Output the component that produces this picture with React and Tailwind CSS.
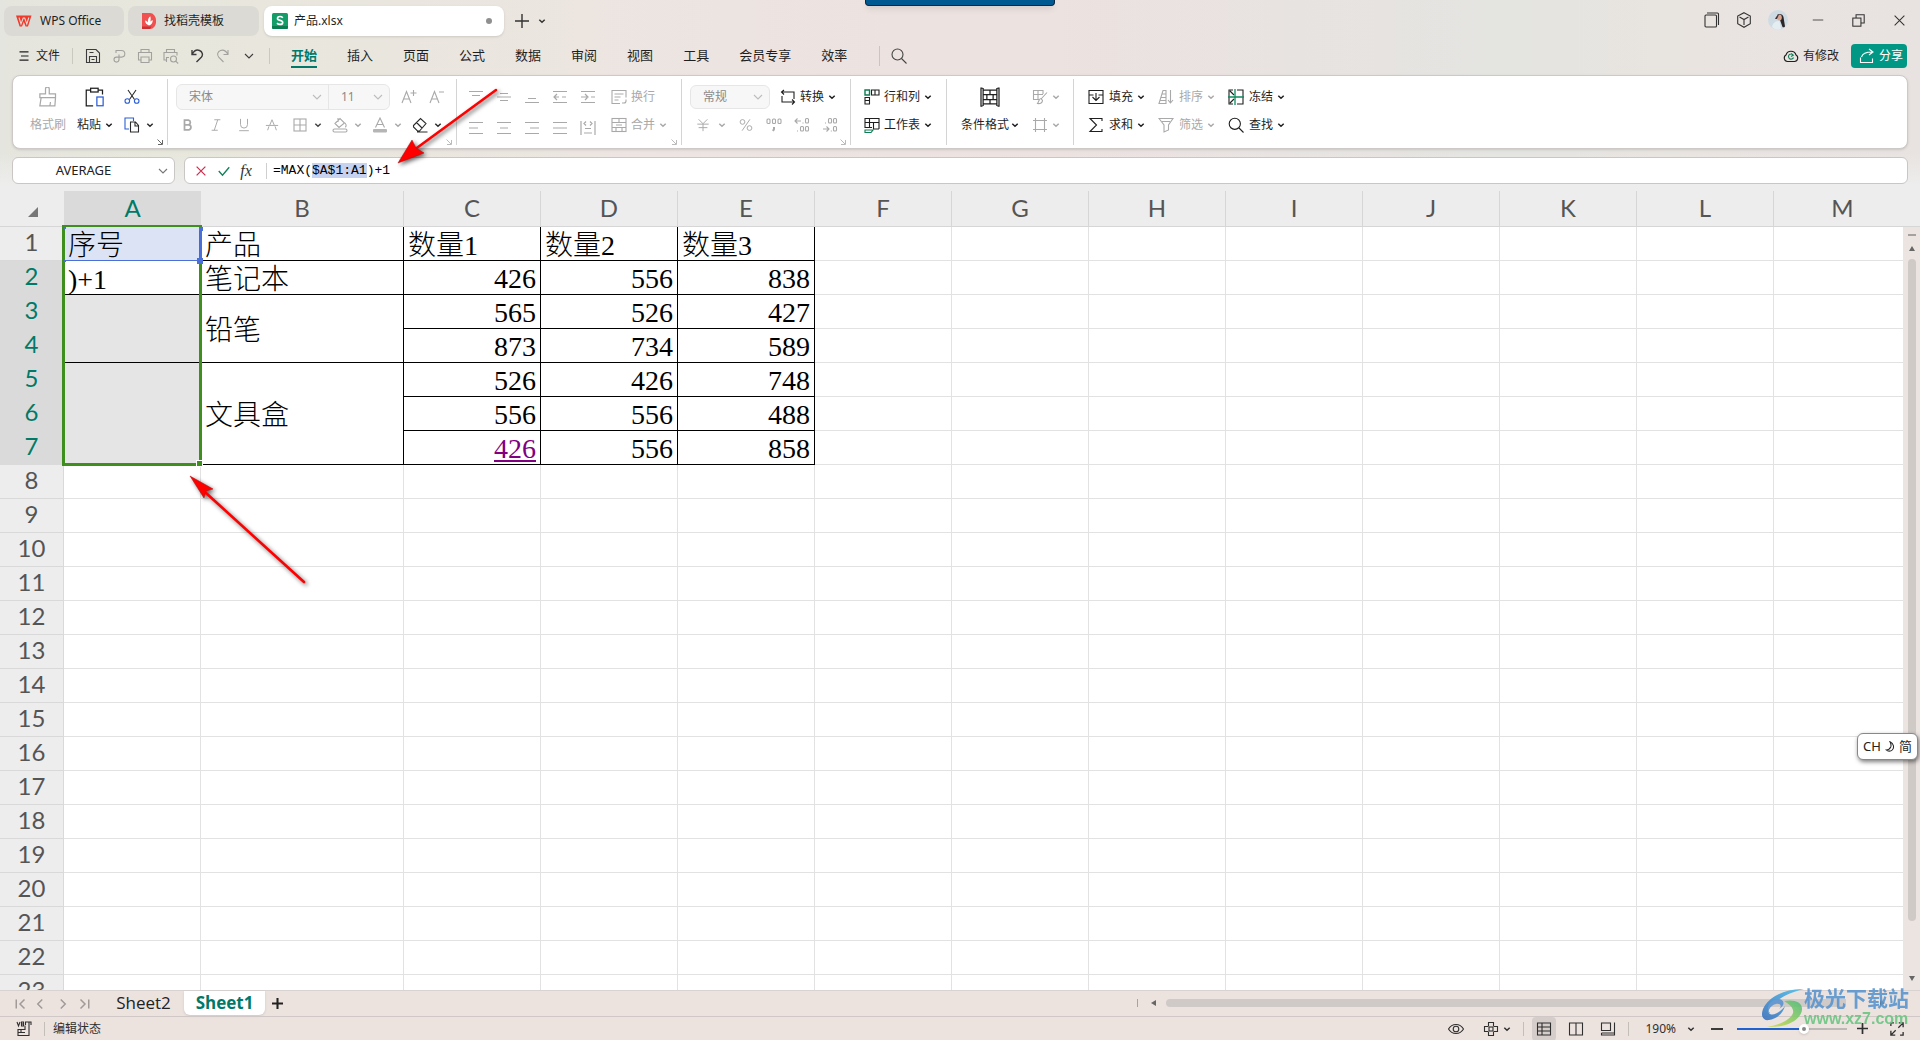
import React from "react";

const UI = "font-['Noto_Sans','Noto_Sans_CJK_SC',sans-serif]";
const SHEET_FONT = "font-['Liberation_Serif','Noto_Sans_CJK_SC',serif]";

function Icon({ children, size = 16, width = 1.1, className = "" }) {
  return (
    <svg
      width={size}
      height={size}
      viewBox="0 0 16 16"
      fill="none"
      stroke="currentColor"
      strokeWidth={width}
      className={"shrink-0 " + className}
      aria-hidden="true"
    >
      {children}
    </svg>
  );
}

function Chevron({ className = "" }) {
  return (
    <svg width="8" height="8" viewBox="0 0 8 8" fill="none" stroke="currentColor" strokeWidth="1.5" className={"shrink-0 " + className} aria-hidden="true">
      <path d="M1.3 2.8 4 5.3 6.7 2.8" />
    </svg>
  );
}

function WideChevron({ className = "" }) {
  return (
    <svg width="10" height="10" viewBox="0 0 10 10" fill="none" stroke="currentColor" strokeWidth="1.1" className={"shrink-0 " + className} aria-hidden="true">
      <path d="M1 3 5 7 9 3" />
    </svg>
  );
}

function Launcher({ className }) {
  return (
    <svg width="6" height="6" viewBox="0 0 6 6" fill="none" stroke="currentColor" className={"absolute bottom-0 right-1 " + className} aria-hidden="true">
      <path d="M.5.5 5 5M5.5 1v4.5H1" />
    </svg>
  );
}

function Tool({ label, children, dim }) {
  return (
    <button aria-label={label} className={"flex h-7 w-7 items-center justify-center " + (dim ? "text-[#a9a9a9]" : "text-[#2b2b2b]")}>
      {children}
    </button>
  );
}

function ToolMenu({ label, children, dim, darkArrow }) {
  return (
    <button aria-label={label} className={"flex h-7 w-10 items-center gap-1 pl-[6px] " + (dim ? "text-[#a9a9a9]" : "text-[#2b2b2b]")}>
      {children}
      <Chevron className={darkArrow ? "ml-[2px] text-[#444]" : "ml-[2px]"} />
    </button>
  );
}

function LabelTool({ label, icon, dim, arrow = true }) {
  return (
    <button className={"flex h-7 items-center gap-1 whitespace-nowrap text-xs " + (dim ? "text-[#a9a9a9]" : "text-[#1f1f1f]")}>
      {icon}
      <span>{label}</span>
      {arrow && <Chevron />}
    </button>
  );
}

function Group({ className, children, launcher }) {
  return (
    <div className={"relative h-[66px] shrink-0 border-r border-[#d4d4d4] pt-1 " + className}>
      {children}
      {launcher && <Launcher className={launcher} />}
    </div>
  );
}

function Picker({ label, value, className }) {
  return (
    <div className={"relative flex h-6 items-center " + className}>
      <select aria-label={label} className="h-full w-full appearance-none bg-transparent text-xs text-[#8a8a8a] outline-none pl-3" defaultValue={value}>
        <option>{value}</option>
      </select>
      <WideChevron className="pointer-events-none absolute right-1.5 text-[#bdbdbd]" />
    </div>
  );
}

function TitleBar() {
  return (
    <div className="flex h-[38px] items-start pl-1 pt-1.5 text-xs text-[#1f1f1f]">
      <button className="flex h-[30px] w-[120px] items-center gap-2 rounded-lg bg-[#dbdad4] pl-3">
        <svg width="16" height="12" viewBox="0 0 16 12" aria-hidden="true">
          <path d="M0 .5h15.5L12 11.500H9.600L7.800 7 6 11.500H3.600z" fill="#f0382b" />
          <path d="M3 2.500 5 9 7.200 3h1.500L10.800 9l2-6.500" fill="none" stroke="#dbdad4" strokeWidth="1.100" />
        </svg>
        <span>WPS Office</span>
      </button>
      <button className="ml-1 flex h-[30px] w-[131px] items-center gap-2 rounded-lg bg-[#dbdad4] pl-3.5">
        <svg width="14" height="16" viewBox="0 0 14 16" aria-hidden="true">
          <path d="M0 0h8a6 7.500 0 0 1 6 7.500A6 7.500 0 0 1 8 16H0z" fill="#f0504f" />
          <path d="M0 13.500h9.500L8 16H0z" fill="#c93234" />
          <path d="M7 12.500C4.300 11.500 3 9.800 3.200 7.600c1.300.3 2.200 1 2.800 2.100C5.600 7 6.300 4.700 8.300 3.300c.6 2 .5 3.800-.1 5.600.6-.9 1.400-1.500 2.600-1.700-.1 2.600-1.200 4.500-3.800 5.300z" fill="#fff" />
        </svg>
        <span>找稻壳模板</span>
      </button>
      <button className="ml-[5px] flex h-[30px] w-60 items-center gap-1.5 rounded-lg bg-white pl-2 pr-3 shadow-sm">
        <svg width="16" height="16" viewBox="0 0 16 16" aria-hidden="true">
          <rect width="16" height="16" rx="1.500" fill="#149c69" />
          <path d="M0 13h16v1.500A1.500 1.500 0 0 1 14.500 16h-13A1.500 1.500 0 0 1 0 14.500z" fill="#0b7b50" />
          <path d="M10.800 4.700C10 3.800 9 3.500 8 3.500c-1.500 0-2.500.7-2.500 1.900 0 2.600 5.200 1.300 5.200 4 0 1.300-1.100 2-2.700 2-1.200 0-2.200-.4-3-1.300" fill="none" stroke="#fff" strokeWidth="1.700" />
        </svg>
        <span>产品.xlsx</span>
        <span className="ml-auto h-1.5 w-1.5 rounded-full bg-[#8f8f8f]" />
      </button>
      <button aria-label="新建" className="ml-2.5 flex h-[30px] w-4 items-center text-[#333]">
        <Icon width={1.4}><path d="M8 1v14M1 8h14" /></Icon>
      </button>
      <button aria-label="标签列表" className="ml-2 flex h-[30px] items-center text-[#333]"><Chevron /></button>
      <div className="ml-auto flex h-7 items-center pr-[14px] text-[#333]">
        <button aria-label="窗口" className="mr-4">
          <Icon><rect x="1" y="3" width="11.500" height="12" rx="1" /><path d="M3 1h10.500c.8 0 1 .3 1 1v11" /></Icon>
        </button>
        <button aria-label="工作区" className="mr-4">
          <Icon><path d="M8 .7 14.300 4v7.700L8 15.300 1.700 11.700V4zM3.500 5 8 7.500 12.500 5M8 7.500v5.500" /></Icon>
        </button>
        <button aria-label="账户" className="mr-6">
          <svg width="20" height="20" viewBox="0 0 20 20" aria-hidden="true">
            <circle cx="10" cy="10" r="10" fill="#cfdbe3" />
            <path d="M9 5c2-2 6-1 6.500 2l1.500 9.500c-1 1-2 1-2.500.5L12 10z" fill="#2b2428" />
            <ellipse cx="11.500" cy="7.500" rx="2.300" ry="3" fill="#d9a692" />
            <path d="M7 9c1-2 2-4 4-4.500L9 9z" fill="#40343a" />
            <path d="M4 17c1-5 4-6 7.500-6l1.500 8c-3 1.400-6.500.8-9-2z" fill="#e4edf1" />
          </svg>
        </button>
        <button aria-label="最小化" className="mr-7"><Icon size={12}><path d="M1 8h14" /></Icon></button>
        <button aria-label="还原" className="mr-7">
          <Icon size={13} width={1.300}><rect x="1" y="5" width="10" height="10" /><path d="M5 5V1h10v10h-4" /></Icon>
        </button>
        <button aria-label="关闭"><Icon size={13} width={1.300}><path d="M2 2l12 12M14 2 2 14" /></Icon></button>
      </div>
    </div>
  );
}

const MENUS = ["插入", "页面", "公式", "数据", "审阅", "视图", "工具", "会员专享", "效率"];

function MenuBar() {
  return (
    <div className="flex h-[37px] items-center pl-[18px] pr-[13px] pb-0.5 text-xs text-[#1f1f1f]">
      <button className="flex items-center gap-1.5">
        <Icon size={12} width={1.400}><path d="M2 2.500h12M4 8h10M2 13.500h12" /></Icon>
        <span>文件</span>
      </button>
      <span className="ml-3 h-4 w-px bg-[#cbc8c2]" />
      <div className="ml-3 flex items-center gap-2.5 text-[#3c3c3c]">
        <button aria-label="保存"><Icon><path d="M1.500 1.500h9.500l3.500 3.500v9.500h-13zM4.500 14.500V8.500h7v6M4.500 4.500h4M6.500 11.500h3" /></Icon></button>
        <button aria-label="输出" className="text-[#a3a19d]"><Icon><path d="M5 5V2.500h5.500a3.300 3.300 0 0 1 0 6.600H5.500a2.500 2.500 0 1 0 2.500 2.500V6.500" /></Icon></button>
        <button aria-label="打印" className="text-[#a3a19d]"><Icon><path d="M4 4.500v-3h8v3M4 12H1.500V4.500h13V12H12M4 9h8v5.500H4z" /></Icon></button>
        <button aria-label="打印预览" className="text-[#a3a19d]"><Icon><path d="M3.500 4.500v-3h8v3M3.500 12H1V4.500h13v3M3.500 14V9.500H6" /><circle cx="10.500" cy="11" r="3" /><path d="m12.700 13.200 2.500 2.300" /></Icon></button>
        <button aria-label="撤销"><Icon width={1.400}><path d="M3 2v4.500h4.500M3.300 6C5 3 8 1.500 10.500 2.500c3 1.200 3.800 4.500 1.800 6.700L7.500 14" /></Icon></button>
        <button aria-label="恢复" className="text-[#a3a19d]"><Icon><path d="M13 2v4.500H8.500M12.700 6C11 3 8 1.500 5.500 2.500 2.500 3.700 1.700 7 3.700 9.200L8.500 14" /></Icon></button>
        <button aria-label="更多" className="pl-[3px]"><WideChevron /></button>
      </div>
      <span className="ml-[15px] h-4 w-px bg-[#cbc8c2]" />
      <nav className="ml-[21px] flex items-center gap-[30px] text-[13px]">
        <button className="relative font-bold text-[#00796b]">
          开始
          <span className="absolute -bottom-1 left-0 h-0.5 w-full bg-[#00796b]" />
        </button>
        {MENUS.map((m) => (
          <button key={m}>{m}</button>
        ))}
      </nav>
      <span className="ml-8 h-5 w-px bg-[#cbc5c2]" />
      <button aria-label="搜索" className="ml-[11px] text-[#444]"><Icon><circle cx="6.500" cy="6.500" r="5.500" /><path d="m10.500 10.500 5 5" /></Icon></button>
      <button className="ml-auto flex items-center gap-1">
        <Icon><path d="M4.500 13.500h7a3.500 3.500 0 0 0 1.500-6.500A5.200 5.200 0 0 0 3 7a3.500 3.500 0 0 0 1.500 6.500z" /><path d="M10.300 7.200A2.600 2.600 0 1 0 10.500 9.500M8 5.500l2.300 1.700L8 8.500" stroke="#12805c" /></Icon>
        <span>有修改</span>
      </button>
      <button className="ml-3 flex h-6 w-14 items-center gap-1 rounded bg-[#009885] pl-2 text-white">
        <Icon><path d="M1.500 9.500v5h12v-4M2.500 9C3.500 5.500 6 4 13 4M10 1l4 3-4 3" /></Icon>
        <span>分享</span>
      </button>
    </div>
  );
}

function AlignIcon({ d }) {
  return <Icon width={1.200}><path d={d} /></Icon>;
}

function Ribbon() {
  return (
    <div className="mx-3 flex h-[74px] overflow-hidden rounded-lg border border-[#cdc9c7] bg-white py-[3px] shadow-sm">
      <Group className="flex w-[155px] pl-[11px] text-xs" launcher="text-[#666]">
        <button className="flex w-12 flex-col items-center text-[#a9a9a9]">
          <span className="flex h-7 items-center"><Icon size={20} width={1}><path d="M1.500 8.500v-3h4.500V1.500a1.500 1.500 0 0 1 3 0V5.500h5v3zM2.500 8.500 1.500 15h12l.5-6.500M9.500 15l.5-3" /></Icon></span>
          <span className="flex h-7 items-center whitespace-nowrap">格式刷</span>
        </button>
        <button className="flex w-[46px] flex-col items-center text-[#1f1f1f]">
          <span className="flex h-7 items-center"><Icon size={20} width={1}><path d="M6.500 15H1V2.500h3.500M10.500 2.500H14V6" /><rect x="4.500" y="1" width="6" height="3" /><rect x="9.500" y="8" width="5" height="7" stroke="#2b5ed8" /></Icon></span>
          <span className="flex h-7 items-center gap-1 whitespace-nowrap">粘贴<Chevron /></span>
        </button>
        <div>
          <Tool label="剪切"><Icon><path d="M4 1l6.500 9.500M12 1 5.500 10.500" /><circle cx="3.300" cy="12" r="2.300" stroke="#2b5ed8" /><circle cx="12.700" cy="12" r="2.300" stroke="#2b5ed8" /></Icon></Tool>
          <ToolMenu label="复制"><Icon><path d="M5 12H1V1h8.500v3" stroke="#2b5ed8" /><path d="M6.500 5h5l3 3.500V15h-8zM11 5v4h3.500" /></Icon></ToolMenu>
        </div>
      </Group>
      <Group className="w-[289px] pl-2" launcher="text-[#bbb]">
        <div className="flex h-7 items-center">
          <div className="flex rounded-md border border-[#e6e6e6] bg-[#f7f7f7]">
            <Picker label="字体" value="宋体" className="w-[152px] border-r border-[#e6e6e6]" />
            <Picker label="字号" value="11" className="w-[60px]" />
          </div>
          <div className="ml-[5px] flex text-[#a9a9a9]">
            <Tool dim label="增大字号"><Icon><path d="M1 14 5.500 2.500 10 14M2.500 10h6M12.500 1v6M9.500 4h6" /></Icon></Tool>
            <Tool dim label="减小字号"><Icon><path d="M1 14 5.500 2.500 10 14M2.500 10h6M10 3h5" /></Icon></Tool>
          </div>
        </div>
        <div className="-ml-0.5 flex">
          <Tool dim label="加粗"><Icon size={14} width={2}><path d="M4 2.500h4.500a2.700 2.700 0 0 1 0 5.300H4zM4 7.800h5a2.900 2.900 0 0 1 0 5.700H4z" /></Icon></Tool>
          <Tool dim label="倾斜"><Icon size={14}><path d="M6 2h7M3 14h7M10 2 6 14" /></Icon></Tool>
          <Tool dim label="下划线"><Icon size={14}><path d="M4 1v6.500a4 4 0 0 0 8 0V1M2.500 14.500h11" /></Icon></Tool>
          <Tool dim label="删除线"><Icon size={14}><path d="M1 8.500h14M8 2 5.500 8M8 2l2.500 6M4.500 9.500 3 14M11.500 9.500 13 14" /></Icon></Tool>
          <ToolMenu dim darkArrow label="边框"><Icon><rect x="2" y="2" width="12" height="12" /><path d="M8 2v12M2 8h12" /></Icon></ToolMenu>
          <ToolMenu dim label="填充颜色"><Icon><path d="M3 6.500 8 1.500l4.500 4.500L7 10.500zM6 1v4M13 6c2 2.500 1 4 0 4" /><rect x="1" y="12" width="14" height="3" rx="1.500" /></Icon></ToolMenu>
          <ToolMenu dim label="字体颜色"><Icon><path d="M3.500 10.500 8 1l4.500 9.500M5 7.500h6" /><rect x="1" y="12" width="14" height="3.500" rx="1" fill="#b5b5b5" stroke="none" /></Icon></ToolMenu>
          <ToolMenu label="清除"><Icon><path d="M1.500 8.500 8.500 1.500l5.500 5-6.500 7.500H5.500L1.500 10zM4.500 5.500 10 11M5 15h10.500" /></Icon></ToolMenu>
        </div>
      </Group>
      <Group className="flex w-[225px] pl-[5px]" launcher="text-[#bbb]">
        <div className="grid shrink-0 grid-cols-5">
          <Tool dim label="顶端对齐"><AlignIcon d="M1 2.500h14M4 6.500h8" /></Tool>
          <Tool dim label="垂直居中"><AlignIcon d="M4 4.500h8M1 8h14M4 11.500h8" /></Tool>
          <Tool dim label="底端对齐"><AlignIcon d="M4 9.500h8M1 13.500h14" /></Tool>
          <Tool dim label="减少缩进"><AlignIcon d="M1 2.500h14M1 13.500h14M2 8h5M10 8h4M5 5 2 8l3 3" /></Tool>
          <Tool dim label="增加缩进"><AlignIcon d="M1 2.500h14M1 13.500h14M1 8h6M5 5l3 3-3 3M11 8h4" /></Tool>
          <Tool dim label="左对齐"><AlignIcon d="M1 2.500h14M1 8h9M1 13.500h14" /></Tool>
          <Tool dim label="居中"><AlignIcon d="M1 2.500h14M4 8h8M1 13.500h14" /></Tool>
          <Tool dim label="右对齐"><AlignIcon d="M1 2.500h14M6 8h9M1 13.500h14" /></Tool>
          <Tool dim label="两端对齐"><AlignIcon d="M1 2.500h14M1 8h14M1 13.500h14" /></Tool>
          <Tool dim label="分散对齐"><AlignIcon d="M1 1v14M15 1v14M5 8.500h6M4 13h8M6 1.500 4 3.500l2 2M10 1.500l2 2-2 2" /></Tool>
        </div>
        <div className="ml-[9px] flex flex-col items-start">
          <LabelTool dim arrow={false} label="换行" icon={<Icon><path d="M9 14.500H1v-13h14v7M3.500 5h9M3.500 8h6M3.500 11h4M15 10.500v1.500a2 2 0 0 1-2 2h-2" /></Icon>} />
          <LabelTool dim label="合并" icon={<Icon><rect x="1" y="1.500" width="14" height="13" /><path d="M1 5.500h14M1 10.500h14M8 1.500v4M5 8h6M5 10.500v4M11 10.500v4" /></Icon>} />
        </div>
      </Group>
      <Group className="w-[169px] pl-2" launcher="text-[#bbb]">
        <div className="flex h-7 items-center gap-2.5">
          <Picker label="数字格式" value="常规" className="w-20 rounded-md border border-[#e6e6e6] bg-[#f7f7f7]" />
          <LabelTool label="转换" icon={<Icon><path d="M4 1 1.500 3 4 5.500M1.500 3H14v7M12 10.500l2.500 2.500L12 15.500M14.500 13H2V7" /></Icon>} />
        </div>
        <div className="flex text-[#a9a9a9]">
          <button aria-label="货币" className="flex h-7 w-[42px] items-center gap-2 pl-1.5"><Icon size={14}><path d="M3 1.500 8 6.500l5-5M8 6.500V15M1.500 7h13M3 11h10" /></Icon><Chevron /></button>
          <Tool dim label="百分比"><Icon size={14}><circle cx="4" cy="4.500" r="2.700" /><circle cx="12" cy="11.500" r="2.700" /><path d="M12.500 1.500 3.500 14.500" /></Icon></Tool>
          <Tool dim label="千位分隔"><Icon><rect x="1" y="2" width="3" height="4.500" rx="1" /><rect x="6.500" y="2" width="3" height="4.500" rx="1" /><rect x="12" y="2" width="3" height="4.500" rx="1" /><path d="M8 10v2l-1 2" strokeWidth="2" /></Icon></Tool>
          <Tool dim label="增加小数"><Icon><path d="M1 4h6M3.500 1.500 1 4l2.500 2.500M8.500 6h1M3 14h1" /><rect x="11.500" y="1.500" width="3" height="4.500" rx="1" /><rect x="6.500" y="9.500" width="3" height="4.500" rx="1" /><rect x="11.500" y="9.500" width="3" height="4.500" rx="1" /></Icon></Tool>
          <Tool dim label="减少小数"><Icon><path d="M1 12h6M4.500 9.500 7 12l-2.500 2.500M8.800 14h1M3 6h1" /><rect x="11.500" y="1.500" width="3" height="4.500" rx="1" /><rect x="6.500" y="1.500" width="3" height="4.500" rx="1" /><rect x="11.500" y="9.500" width="3" height="4.500" rx="1" /></Icon></Tool>
        </div>
      </Group>
      <Group className="flex w-24 flex-col items-start pl-[13px]">
        <LabelTool label="行和列" icon={<Icon><path d="M1 1h4.500v5H1z" stroke="#0e7d54" strokeWidth="1.400" /><path d="M7.500 1h7.500v5H7.500zM11 1v5M1 8.500h4.500V15H1zM1 11.500h4.500" /></Icon>} />
        <LabelTool label="工作表" icon={<Icon><path d="M15 12V1.500H1V11M1 5.500h14M5.500 1.500V11M1 10.500h7M9.500 5.500V12H15" /><path d="M1 13h8l-2 2.500H1z" stroke="#0e7d54" /></Icon>} />
      </Group>
      <Group className="flex w-[127px] gap-[13px] pl-[14px] text-xs">
        <button className="flex flex-col items-center text-[#1f1f1f]">
          <span className="flex h-7 items-center"><Icon size={20} width={1}><path d="M2 .8H.8v14.400H2M14 .8h1.200v14.400H14M2.500 2.500h11v11h-11zM2.500 6h11M2.500 10h11M8 2.500V6M5.500 6v4M10.500 6v4M8 10v3.500M2.500 .8v1.700M13.500 .8v1.700M2.500 13.500v1.700M13.500 13.500v1.700" /></Icon></span>
          <span className="flex h-7 items-center gap-0.5 whitespace-nowrap">条件格式<Chevron /></span>
        </button>
        <div className="text-[#a9a9a9]">
          <button aria-label="表格样式" className="flex h-7 items-center gap-1"><Icon><path d="M7 10.500H1.500v-9H11V5M1.500 5.500H11M6 1.500v9M15 3.500 9.500 9.500M9 9.500c-2 0-2 3-3.500 5 3 .5 5-1 5-3z" /></Icon><Chevron /></button>
          <button aria-label="单元格样式" className="flex h-7 items-center gap-1"><Icon><path d="M3.500 1v14M12.500 1v14M1 3.500h14M1 12.500h14" /></Icon><Chevron /></button>
        </div>
      </Group>
      <div className="grid shrink-0 auto-cols-max grid-flow-col grid-rows-[28px_28px] gap-x-[13px] pl-[14px] pt-1">
        <LabelTool label="填充" icon={<Icon className="mr-px"><path d="M1 6V1.500h14V6M1 6h4.500M10.500 6H15M1 6v8.500h14V6M8 4v7.500M4.500 8 8 11.500 11.500 8" /></Icon>} />
        <LabelTool label="求和" icon={<Icon className="mr-px"><path d="M14 4V1.500H2L8.500 8 2 14.500h12V12" /></Icon>} />
        <LabelTool dim label="排序" icon={<Icon className="mr-px"><path d="M1 14.500 5 1.500h3v13zM4 5h4M3 8.500h5M2 11.500h6M12.500 1v13M10 11l2.500 3 2.500-3" /></Icon>} />
        <LabelTool dim label="筛选" icon={<Icon className="mr-px"><path d="M1 1.500h14L10.500 8v5L6 15V8zM4 4.500h8" /></Icon>} />
        <LabelTool label="冻结" icon={<Icon className="mr-px"><path d="M5 1H1v14h4M9 1h6v14H9M2 2l4 4M2 14l4-4" /><path d="M7 0v16M0 8h16" stroke="#0e8a5f" strokeWidth="1.300" /></Icon>} />
        <LabelTool label="查找" icon={<Icon className="mr-px"><circle cx="6.800" cy="6.800" r="5.600" /><path d="m11 11 4.500 4.500" /></Icon>} />
      </div>
    </div>
  );
}

function FormulaBar() {
  return (
    <div className="mt-2 flex gap-[9px] px-3">
      <div className="flex h-[27px] w-[163px] shrink-0 items-center rounded-md border border-[#c9c6c4] bg-white pr-1.5">
        <input aria-label="名称框" className="w-full bg-transparent px-3 pr-4 text-center text-[13px] text-[#222] outline-none" defaultValue="AVERAGE" />
        <WideChevron className="text-[#777]" />
      </div>
      <div className="flex h-[27px] flex-1 items-center rounded-md border border-[#c9c6c4] bg-white pl-[11px]">
        <button aria-label="取消" className="text-[#c9304f]"><Icon size={10} width={2}><path d="M1 1l14 14M15 1 1 15" /></Icon></button>
        <button aria-label="输入" className="ml-3 text-[#14805a]"><Icon size={12} width={1.800}><path d="M1 8l5 5.500L15 3" /></Icon></button>
        <button aria-label="插入函数" className="ml-2 w-4 font-['Liberation_Serif',serif] text-base leading-5 text-[#333] italic">fx</button>
        <span className="ml-3 h-4 w-px bg-[#cfcfcf]" />
        <div role="textbox" aria-label="编辑栏" className="ml-1.5 font-['Liberation_Mono',monospace] text-[13px] leading-4 text-black">
          =MAX(<span className="bg-[#c7d1f0]">$A$1:A1</span>)+1
        </div>
      </div>
    </div>
  );
}

const COLUMNS = "ABCDEFGHIJKLM".split("");
const EMPTY_AFTER_E = COLUMNS.slice(5);
const ROWS = Array.from({ length: 23 }, (_, i) => i + 1);

const DATA = {
  1: [
    { v: "序号", bg: "bg-[#dce3f5]" },
    { v: "产品" },
    { v: "数量1" },
    { v: "数量2" },
    { v: "数量3" },
  ],
  2: [{ v: ")+1" }, { v: "笔记本" }, { v: 426 }, { v: 556 }, { v: 838 }],
  3: [{ v: "", span: 2, bg: "bg-[#e5e5e5]" }, { v: "铅笔", span: 2 }, { v: 565 }, { v: 526 }, { v: 427 }],
  4: [{ v: 873 }, { v: 734 }, { v: 589 }],
  5: [{ v: "", span: 3, bg: "bg-[#e5e5e5]" }, { v: "文具盒", span: 3 }, { v: 526 }, { v: 426 }, { v: 748 }],
  6: [{ v: 556 }, { v: 556 }, { v: 488 }],
  7: [{ v: 426, link: true }, { v: 556 }, { v: 858 }],
};

function DataCell({ cell }) {
  const numeric = typeof cell.v === "number";
  return (
    <td
      rowSpan={cell.span || 1}
      className={
        "border-r border-b border-black text-[28px] text-black whitespace-nowrap " +
        SHEET_FONT + " " +
        (numeric ? "pt-0.5 pr-1 text-right leading-[30px] " : "pt-1 pl-1 text-left font-light leading-7 ") +
        (cell.bg || "bg-white")
      }
    >
      {cell.link ? <a href="#" className="text-[#800080] underline decoration-2 underline-offset-2">{cell.v}</a> : cell.v}
    </td>
  );
}

function Grid() {
  return (
    <div className="relative min-w-0 flex-1 overflow-hidden">
      <table className="w-[1911px] table-fixed border-separate border-spacing-0 font-['Lato',sans-serif] text-2xl text-[#555]">
        <colgroup>
          <col className="w-16" />
          {COLUMNS.map((c) => (
            <col key={c} className={c === "B" ? "w-[203px]" : "w-[137px]"} />
          ))}
        </colgroup>
        <thead>
          <tr className="h-9">
            <th className="border-b border-[#d6d6d6] bg-[#ededed] p-0">
              <svg width="10" height="10" viewBox="0 0 10 10" className="ml-[28px] mt-1.5" aria-hidden="true"><path d="M10 0v10H0z" fill="#777" /></svg>
            </th>
            {COLUMNS.map((c) => (
              <th
                key={c}
                scope="col"
                className={
                  "border-b border-[#d6d6d6] p-0 pb-0.5 leading-8 font-normal " +
                  (c === "A" ? "bg-[#dadada] text-[#007a68]" : c === "M" ? "bg-[#ededed]" : "border-r bg-[#ededed]")
                }
              >
                {c}
              </th>
            ))}
          </tr>
        </thead>
        <tbody className="bg-white">
          {ROWS.map((r) => (
            <tr key={r} className="h-[34px]">
              <th
                scope="row"
                className={
                  "h-[34px] border-r border-b p-0 pb-1 leading-7 font-normal " +
                  (r >= 2 && r <= 7 ? "border-[#d2d2d2] border-b-[#dadada] bg-[#dadada] text-[#007a68]" : "border-[#d9d9d9] bg-[#ededed]")
                }
              >
                {r}
              </th>
              {DATA[r] && DATA[r].map((cell, i) => <DataCell key={i} cell={cell} />)}
              {(DATA[r] ? EMPTY_AFTER_E : COLUMNS).map((c) => (
                <td key={c} className="border-r border-b border-[#e2e2e2] p-0" />
              ))}
            </tr>
          ))}
        </tbody>
      </table>
      <div className="pointer-events-none absolute top-[34px] left-[62px] h-[241px] w-[140px] border-[3px] border-t-2 border-[#3f8f1f]">
        <span className="absolute -right-1 -bottom-1 h-[5px] w-[5px] border border-white bg-[#3f8f1f] box-content" />
      </div>
      <div className="pointer-events-none absolute top-[36px] left-16 h-[34px] w-[138px] border-r-2 border-b border-[#4a6fd6]">
        <span className="absolute top-0 -right-[3px] h-1 w-1 bg-[#4a6fd6]" />
        <span className="absolute -right-[3px] -bottom-1 h-1.5 w-1.5 bg-[#4a6fd6]" />
        <span className="absolute top-0 left-0 h-0.5 w-0.5 bg-[#4a6fd6]" />
        <span className="absolute -bottom-0.5 left-0 h-0.5 w-0.5 bg-[#4a6fd6]" />
      </div>
    </div>
  );
}

function VerticalScroll() {
  return (
    <div className="mt-[35px] flex w-[17px] shrink-0 flex-col items-center border-t border-[#d6d6d6] bg-[#ece4e1] pt-[7px]">
      <span className="h-0.5 w-2 bg-[#a5a19f]" />
      <svg width="6" height="5" viewBox="0 0 6 5" className="mt-2.5" aria-hidden="true"><path d="M3 0l3 5H0z" fill="#666" /></svg>
      <div className="mt-2 mb-[55px] w-2 flex-1 rounded-full bg-[#d0cac7]" />
      <svg width="6" height="5" viewBox="0 0 6 5" className="mb-[9px]" aria-hidden="true"><path d="M3 5l3-5H0z" fill="#666" /></svg>
    </div>
  );
}

function SheetTabs() {
  return (
    <div className="flex h-[26px] border-t border-[#d8d2d0] text-[17px] text-[#222]">
      <div className="flex w-[103px] items-center gap-2 pl-[14px] text-[#a09a98]">
        <button aria-label="第一个"><Icon size={12} width={2}><path d="M3 2v12M14 2 8 8l6 6" /></Icon></button>
        <button aria-label="上一个"><Icon size={12} width={2}><path d="M11 2 5 8l6 6" /></Icon></button>
        <button aria-label="下一个" className="ml-[3px]"><Icon size={12} width={2}><path d="M5 2l6 6-6 6" /></Icon></button>
        <button aria-label="最后一个" className="ml-0.5"><Icon size={12} width={2}><path d="M2 2l6 6-6 6M13 2v12" /></Icon></button>
      </div>
      <button className="h-6 w-[81px] leading-[22px] font-['Open_Sans',sans-serif]">Sheet2</button>
      <button className="h-6 w-[81px] rounded-b-md bg-white leading-[22px] font-bold text-[#007a68] shadow-sm font-['Open_Sans',sans-serif]">Sheet1</button>
      <button aria-label="新建工作表" className="ml-[7px]"><Icon size={11} width={3}><path d="M8 0v16M0 8h16" /></Icon></button>
      <div className="ml-auto flex w-[783px] items-center pb-0.5">
        <span className="h-2 w-px bg-[#a8a3a1]" />
        <svg width="5" height="6" viewBox="0 0 5 6" className="ml-[13px]" aria-hidden="true"><path d="M0 3l5-3v6z" fill="#666" /></svg>
        <div className="ml-2.5 h-2 w-[680px] rounded-l-full bg-[#cfc9c7]" />
        <svg width="5" height="6" viewBox="0 0 5 6" className="ml-[34px]" aria-hidden="true"><path d="M5 3 0 0v6z" fill="#666" /></svg>
      </div>
    </div>
  );
}

function StatusBar() {
  return (
    <div className="flex h-6 items-center border-t border-[#cfc8c6] pl-4 pr-4 text-xs text-[#2f2f2f]">
      <button aria-label="宏">
        <Icon><path d="M1 1l1.500 4L4 1M5.500 1v4h2V1zM5.500 3h2M9.500 4V1H15v3M13 1v13.500H2V8.500h7V4.500M5 8.500v3M2 11.500h7" /></Icon>
      </button>
      <span className="ml-3 h-3.5 w-px bg-[#c4bebb]" />
      <span className="ml-2">编辑状态</span>
      <div className="ml-auto flex items-center">
        <button aria-label="护眼模式"><Icon><path d="M.5 8C4 2 12 2 15.500 8 12 14 4 14 .5 8z" /><circle cx="8" cy="8" r="2.800" /></Icon></button>
        <button aria-label="阅读模式" className="ml-[19px] flex items-center gap-1"><Icon><path d="M5.500 5.500V1.500h5v4M5.500 10.500v4h5v-4M5 5.500H1.500v5H5M11 5.500h3.500v5H11" /><rect x="6" y="6" width="4" height="4" /></Icon><Chevron /></button>
        <span className="ml-3 h-3.5 w-px bg-[#c4bebb]" />
        <button aria-label="普通视图" className="ml-2 flex h-6 w-6 items-center justify-center rounded bg-[#d5cdca]"><Icon><path d="M1.500 2h13v12h-13zM1.500 6h13M1.500 10h13M6 2v12" /></Icon></button>
        <button aria-label="分页预览" className="ml-3"><Icon><path d="M1.500 2h13v12h-13zM8 2v12" /></Icon></button>
        <button aria-label="页面布局" className="ml-4"><Icon><path d="M1.500 2h9v7.500h-9zM14.500 1.500v12.500H1.500v-2M14.500 12H1.500" /></Icon></button>
        <span className="ml-3 h-3.5 w-px bg-[#c4bebb]" />
        <button className="ml-4 flex items-center gap-[11px]">190%<Chevron /></button>
        <button aria-label="缩小" className="ml-4"><Icon size={12} width={2.500}><path d="M0 8h16" /></Icon></button>
        <input
          type="range"
          aria-label="缩放"
          min="0"
          max="100"
          defaultValue="62"
          className="ml-3.5 h-0.5 w-[110px] appearance-none bg-[linear-gradient(to_right,#1f62cf_62%,#bdb7b5_62%)] [&::-webkit-slider-thumb]:h-2.5 [&::-webkit-slider-thumb]:w-2.5 [&::-webkit-slider-thumb]:appearance-none [&::-webkit-slider-thumb]:rounded-full [&::-webkit-slider-thumb]:border-[3px] [&::-webkit-slider-thumb]:border-white [&::-webkit-slider-thumb]:bg-[#888] [&::-webkit-slider-thumb]:shadow"
        />
        <button aria-label="放大" className="ml-2.5"><Icon size={11} width={2.500}><path d="M8 0v16M0 8h16" /></Icon></button>
        <button aria-label="全屏" className="ml-[22px]"><Icon size={14} width={1.500}><path d="M9.500 6.500 15 1M10 1h5v5M6.500 9.500 1 15M1 10v5h5M1 4.500V1h3.500M15 11.500V15h-3.500" /></Icon></button>
      </div>
    </div>
  );
}

function Arrow({ className, width, height, line, head }) {
  return (
    <svg
      width={width}
      height={height}
      viewBox={`0 0 ${width} ${height}`}
      className={"pointer-events-none absolute drop-shadow-[2px_2px_2px_rgba(0,0,0,0.6)] " + className}
      aria-hidden="true"
    >
      <path d={line} stroke="#ff0000" strokeWidth="2.600" strokeLinecap="round" />
      <path d={head} fill="#ff0000" stroke="#a01010" strokeWidth=".5" />
    </svg>
  );
}

function Watermark() {
  return (
    <div className="pointer-events-none absolute right-[11px] bottom-2 flex items-center opacity-90">
      <svg width="44" height="42" viewBox="0 0 44 42" aria-hidden="true">
        <defs>
          <linearGradient id="wm-blue" x1="1" y1="0" x2="0" y2="1"><stop offset="0" stopColor="#4fc0ec" /><stop offset="1" stopColor="#3b72bd" /></linearGradient>
          <linearGradient id="wm-green" x1="0" y1="1" x2="1" y2="0"><stop offset="0" stopColor="#d3dc4d" /><stop offset="1" stopColor="#4ebd7c" /></linearGradient>
        </defs>
        <path d="M44 1C26 0 8 9 3 21c-3 8 1 12 6 11 8-1 14-7 16-14-5 6-11 10-15 8C4 22 18 7 44 1z" fill="url(#wm-blue)" />
        <path d="M10 25c-3 1-2-7 6-9 5-1 6 3 3 5 6-3 6-9 0-10C10 11 5 20 10 25z" fill="#5c93d0" />
        <path d="M24 13c10-2 19 1 18 9-1 9-14 18-35 17 14-2 24-8 26-14 1-5-3-8-9-12z" fill="url(#wm-green)" />
      </svg>
      <div className="pb-1 font-bold">
        <div className="text-[21px] leading-6 text-[#5b96cf]">极光下载站</div>
        <div className="font-['Liberation_Sans',sans-serif] text-base leading-[18px] text-[#6cc583]">www.xz7.com</div>
      </div>
    </div>
  );
}

export default function App() {
  return (
    <div className={"relative flex h-screen flex-col overflow-hidden bg-[#ece3df] " + UI}>
      <div className="bg-[linear-gradient(to_bottom,transparent_80%,#ededed_97%),linear-gradient(to_right,#e5e5df_0%,#e7e7dc_8%,#ece5e0_30%,#ece2e0_55%,#e4e4e1_78%,#e9e4e0_88%,#e8e3e0_100%)] pb-[7px]">
        <TitleBar />
        <MenuBar />
        <Ribbon />
        <FormulaBar />
      </div>
      <div className="flex min-h-0 flex-1 bg-[#ededed]">
        <Grid />
        <VerticalScroll />
      </div>
      <SheetTabs />
      <StatusBar />

      <div className="absolute top-0 left-[865px] h-1.5 w-[190px] rounded-b border border-t-0 border-[#0b2740] bg-[#005a91] shadow-md" />
      <Arrow className="top-[88px] left-[394px]" width={108} height={80} line="M102 2 L20 62" head="M4 75 L18 52 L22 60 L30 65 Z" />
      <Arrow className="top-[472px] left-[186px]" width={124} height={116} line="M118 110 L20 21" head="M4 4 L27 17 L20 19 L18 26 Z" />
      <div className="absolute right-0.5 top-[733px] flex h-[27px] w-[61px] items-center justify-center gap-[3px] rounded-md border border-[#888] bg-white text-[13px] text-[#222] shadow-[1px_2px_4px_rgba(0,0,0,0.5)]">
        <span>CH</span>
        <Icon size={12} width={1.400}><path d="M8 1c5 2 6 8 3 11-2 2-6 2-8 0 3 0 5-2 6-4 1-3 0-5-1-7z" /></Icon>
        <span>简</span>
      </div>
      <Watermark />
    </div>
  );
}
